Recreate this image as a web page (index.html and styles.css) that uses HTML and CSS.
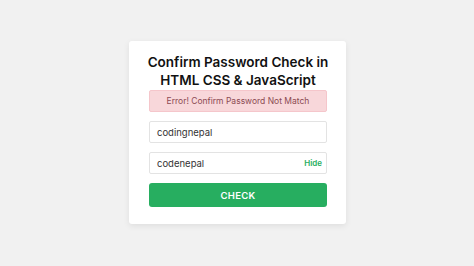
FILE: index.html
```
<!DOCTYPE html>
<html>
<head>
<meta charset="utf-8">
<link rel="stylesheet" href="styles.css">
</head>
<body>
<div class="page">
  <div class="card">
    <h1 class="title">Confirm Password Check in<br>HTML CSS &amp; JavaScript</h1>
    <div class="alert">Error! Confirm Password Not Match</div>
    <div class="field"><span class="value">codingnepal</span></div>
    <div class="field"><span class="value">codenepal</span><span class="toggle">Hide</span></div>
    <button class="btn">CHECK</button>
  </div>
</div>
</body>
</html>
```
FILE: styles.css
```
html, body {
  margin: 0;
  padding: 0;
}
body {
  width: 474px;
  height: 266px;
  background: #f1f1f1;
  font-family: Inter, "Noto Sans", sans-serif;
}
.page {
  height: 266px;
  padding-top: 41px;
  box-sizing: border-box;
  display: flex;
  justify-content: center;
  padding-left: 1px;
}
.card {
  width: 217px;
  height: 183px;
  box-sizing: border-box;
  background: #fff;
  border-radius: 3px;
  box-shadow: 0 2px 6px rgba(0,0,0,0.08);
  padding: 12px 19px 0 20px;
  display: flex;
  flex-direction: column;
}
.title {
  margin: 0 -6px;
  font-size: 13.5px;
  line-height: 18px;
  font-weight: 600;
  color: #111;
  text-align: center;
  white-space: nowrap;
}
.alert {
  margin-top: 1px;
  height: 22px;
  box-sizing: border-box;
  background: #f8d7da;
  border: 1px solid #f5c6cb;
  border-radius: 2px;
  color: #8b4a52;
  font-size: 8.5px;
  display: flex;
  align-items: center;
  justify-content: center;
}
.field {
  margin-top: 9px;
  height: 22px;
  box-sizing: border-box;
  border: 1px solid #e3e3e3;
  border-radius: 2px;
  display: flex;
  align-items: center;
  justify-content: space-between;
  padding: 0 4px 0 7px;
}
.value {
  font-size: 9.5px;
  color: #333;
}
.toggle {
  font-size: 8px;
  font-weight: 600;
  color: #27ae60;
}
.btn {
  margin-top: 9px;
  height: 24px;
  border: none;
  border-radius: 3px;
  background: #27ae60;
  color: #fff;
  font-family: inherit;
  font-size: 9.5px;
  font-weight: 600;
  letter-spacing: 0.3px;
  padding: 0;
}
```
